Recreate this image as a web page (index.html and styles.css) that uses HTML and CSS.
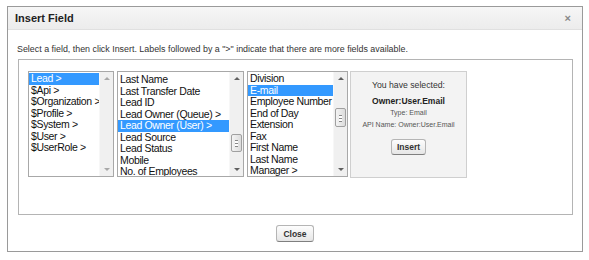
FILE: index.html
```html
<!DOCTYPE html>
<html lang="en">
<head>
    <meta charset="UTF-8">
    <title>Insert Field</title>
    <link rel="stylesheet" href="styles.css">
</head>
<body>
    <div class="dialog">
        <div class="dialog-header">
            <span class="dialog-title">Insert Field</span>
            <span class="dialog-close">&times;</span>
        </div>
        <div class="dialog-body">
            <p class="hint">Select a field, then click Insert. Labels followed by a "&gt;" indicate that there are more fields available.</p>
            <div class="field-box">
                <div class="listbox list-objects">
                    <ul class="options">
                        <li class="selected">Lead &gt;</li>
                        <li>$Api &gt;</li>
                        <li>$Organization &gt;</li>
                        <li>$Profile &gt;</li>
                        <li>$System &gt;</li>
                        <li>$User &gt;</li>
                        <li>$UserRole &gt;</li>
                    </ul>
                    <div class="scrollbar disabled">
                        <span class="arrow up"></span>
                        <span class="track"></span>
                        <span class="arrow down"></span>
                    </div>
                </div>
                <div class="listbox list-lead">
                    <ul class="options">
                        <li>Last Name</li>
                        <li>Last Transfer Date</li>
                        <li>Lead ID</li>
                        <li>Lead Owner (Queue) &gt;</li>
                        <li class="selected">Lead Owner (User) &gt;</li>
                        <li>Lead Source</li>
                        <li>Lead Status</li>
                        <li>Mobile</li>
                        <li>No. of Employees</li>
                    </ul>
                    <div class="scrollbar">
                        <span class="arrow up"></span>
                        <span class="track thumb-low"><span class="thumb"></span></span>
                        <span class="arrow down"></span>
                    </div>
                </div>
                <div class="listbox list-user">
                    <ul class="options">
                        <li>Division</li>
                        <li class="selected">E-mail</li>
                        <li>Employee Number</li>
                        <li>End of Day</li>
                        <li>Extension</li>
                        <li>Fax</li>
                        <li>First Name</li>
                        <li>Last Name</li>
                        <li>Manager &gt;</li>
                    </ul>
                    <div class="scrollbar">
                        <span class="arrow up"></span>
                        <span class="track thumb-mid"><span class="thumb"></span></span>
                        <span class="arrow down"></span>
                    </div>
                </div>
                <div class="selection">
                    <div class="selection-label">You have selected:</div>
                    <div class="selection-name">Owner:User.Email</div>
                    <div class="selection-meta">Type: Email</div>
                    <div class="selection-meta">API Name: Owner:User.Email</div>
                    <button class="btn">Insert</button>
                </div>
            </div>
            <div class="dialog-footer">
                <button class="btn">Close</button>
            </div>
        </div>
    </div>
</body>
</html>
```

FILE: styles.css
```css
body {
    margin: 0;
    padding: 0;
    background-color: #ffffff;
    font-family: "Liberation Sans", Arial, sans-serif;
    color: #222;
}

.dialog {
    margin: 6px 0 0 7px;
    width: 574px;
    height: 244px;
    border: 1px solid #9a9a9a;
    background-color: #fff;
}

.dialog-header {
    height: 22px;
    display: flex;
    align-items: center;
    justify-content: space-between;
    padding: 0 11px 0 7px;
    background: linear-gradient(#f6f6f6, #ececec);
    border-bottom: 1px solid #e0e0e0;
}

.dialog-title {
    font-size: 11px;
    font-weight: bold;
    color: #222;
}

.dialog-close {
    font-size: 11px;
    font-weight: bold;
    color: #888;
    line-height: 1;
}

.dialog-body {
    padding: 0 9px 0 10px;
}

.hint {
    margin: 13px 0 0 -1px;
    height: 13px;
    font-size: 8.9px;
    line-height: 13px;
    color: #333;
}

/* 字段选择区域 */
.field-box {
    margin-top: 3px;
    height: 143px;
    border: 1px solid #b4b4b4;
    padding: 11px 0 0 9px;
    display: flex;
    align-items: flex-start;
    gap: 3px;
}

.listbox {
    height: 104px;
    border: 1px solid #a8a8a8;
    display: flex;
    background-color: #fff;
    overflow: hidden;
}

.list-objects { width: 84px; }
.list-lead { width: 125px; }
.list-user { width: 99px; margin-right: -1px; }

.options {
    list-style: none;
    margin: 0;
    padding: 1px 0 0 0;
    flex: 1;
    font-size: 10.5px;
    letter-spacing: -0.35px;
    line-height: 11.55px;
    color: #111;
    white-space: nowrap;
    overflow: hidden;
}

.list-lead .options { padding-top: 2px; }

.options li {
    padding-left: 2px;
}

.options li.selected {
    background-color: #3399ff;
    color: #fff;
}

.scrollbar {
    width: 13px;
    display: flex;
    flex-direction: column;
    background-color: #f0f0f0;
    border-left: 1px solid #f7f7f7;
}

.arrow {
    height: 13px;
    position: relative;
}

.arrow::after {
    content: '';
    position: absolute;
    left: 4px;
    border-left: 3px solid transparent;
    border-right: 3px solid transparent;
}

.arrow.up::after {
    top: 5px;
    border-bottom: 3px solid #606060;
}

.arrow.down::after {
    top: 5px;
    border-top: 3px solid #606060;
}

.disabled .arrow.up::after { border-bottom-color: #a8a8a8; }
.disabled .arrow.down::after { border-top-color: #a8a8a8; }

.track {
    flex: 1;
    display: flex;
    flex-direction: column;
}

.thumb-low { padding-top: 49px; }
.thumb-mid { padding-top: 23px; }

.thumb {
    margin: 0 1px;
    height: 16px;
    border: 1px solid #a0a0a0;
    border-radius: 2px;
    background: linear-gradient(to right, #f4f4f4, #dcdcdc);
    position: relative;
}

.list-user .thumb { height: 17px; }

.thumb::after {
    content: '';
    position: absolute;
    left: 3px;
    right: 3px;
    top: 50%;
    height: 5px;
    margin-top: -3px;
    border-top: 1px solid #888;
    border-bottom: 1px solid #888;
    background: linear-gradient(#fff 40%, #888 40%, #888 60%, #fff 60%);
}

/* 已选字段信息 */
.selection {
    width: 115px;
    height: 105px;
    border: 1px solid #cfcfcf;
    background-color: #f3f3f3;
    display: flex;
    flex-direction: column;
    align-items: center;
    color: #333;
}

.selection-label {
    margin-top: 8px;
    font-size: 8.7px;
    line-height: 11px;
}

.selection-name {
    margin-top: 5px;
    font-size: 8.5px;
    font-weight: bold;
    line-height: 11px;
    color: #222;
}

.selection-meta {
    font-size: 7px;
    line-height: 12px;
    color: #555;
}

.selection-meta:first-of-type {
    margin-top: 4px;
}

.btn {
    margin-top: 8px;
    height: 16px;
    padding: 0 5px;
    border: 1px solid #b5b5b5;
    border-bottom-color: #7f7f7f;
    border-radius: 3px;
    background: linear-gradient(#fdfdfd, #e6e6e6);
    font-family: "Liberation Sans", Arial, sans-serif;
    font-size: 8.5px;
    font-weight: bold;
    color: #333;
    line-height: 14px;
}

.dialog-footer {
    display: flex;
    justify-content: center;
    padding-top: 10px;
}

.dialog-footer .btn {
    margin: 0 0 0 -1px;
    height: 17px;
    padding: 0 6px;
}
```
